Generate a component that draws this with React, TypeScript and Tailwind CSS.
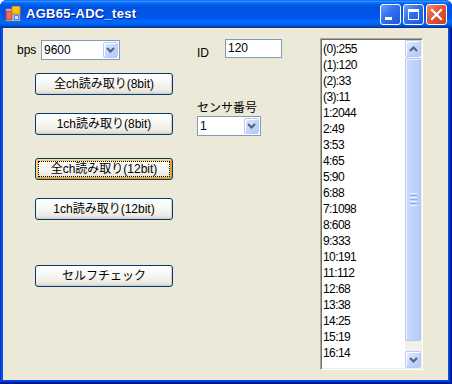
import React from 'react';

const readings = [
  '(0):255', '(1):120', '(2):33', '(3):11', '1:2044', '2:49', '3:53', '4:65', '5:90', '6:88',
  '7:1098', '8:608', '9:333', '10:191', '11:112', '12:68', '13:38', '14:25', '15:19', '16:14',
];

function Chevron({ up }: { up?: boolean }) {
  return (
    <svg width="9" height="6" viewBox="0 0 9 6">
      <polyline
        points={up ? '1,5 4.5,1.5 8,5' : '1,1 4.5,4.5 8,1'}
        fill="none"
        stroke="#4d6185"
        strokeWidth="2"
      />
    </svg>
  );
}

function ArrowBox({ up, className }: { up?: boolean; className?: string }) {
  return (
    <div
      className={`flex items-center justify-center rounded-[2px] border border-[#b9cbf6] bg-[linear-gradient(135deg,#e4ecfe_0%,#c6d6fb_50%,#b4c9f6_100%)] shadow-[inset_1px_1px_0_#ffffff] ${className ?? ''}`}
    >
      <Chevron up={up} />
    </div>
  );
}

function Combo({ value, className }: { value: string; className: string }) {
  return (
    <div className={`flex h-[20px] border border-[#7f9db9] bg-white ${className}`}>
      <span className="flex-1 pl-[2px] text-[12px] leading-[18px] text-black">{value}</span>
      <ArrowBox className="m-[1px] w-[15px]" />
    </div>
  );
}

function XpButton({ label, focused, className }: { label: string; focused?: boolean; className: string }) {
  return (
    <button
      className={`flex h-[22px] w-[138px] rounded-[3px] border border-[#003c74] bg-[linear-gradient(to_bottom,#ffffff_0%,#f6f6f2_50%,#ebe9e1_85%,#d6d0c5_100%)] p-[2px] ${
        focused
          ? 'shadow-[inset_1px_1px_0_#ffd98a,inset_-1px_-1px_0_#e59b17,inset_2px_2px_0_#fbc45a,inset_-2px_-2px_0_#f3a928]'
          : 'shadow-[inset_-1px_-1px_0_#d6d0c5]'
      } ${className}`}
    >
      <span
        className={`flex flex-1 items-center justify-center border text-[12px] leading-none text-black ${
          focused ? 'border-dotted border-black' : 'border-transparent'
        }`}
      >
        {label}
      </span>
    </button>
  );
}

function TitleIcon() {
  return (
    <svg width="16" height="16" viewBox="0 0 16 16">
      <rect x="0.5" y="2.5" width="15" height="13" fill="#9bb3e6" stroke="#3f5f9f" />
      <rect x="1" y="5" width="6" height="9" fill="#d8403a" />
      <rect x="2" y="6" width="4" height="7" fill="#f07060" />
      <rect x="7" y="0" width="8" height="8" fill="#f4c419" stroke="#c08a00" />
      <rect x="9" y="9" width="5" height="5" fill="#5a86d8" />
      <rect x="10" y="10" width="3" height="3" fill="#cfe0ff" />
    </svg>
  );
}

function CaptionButton({ kind }: { kind: 'min' | 'max' | 'close' }) {
  const bg =
    kind === 'close'
      ? 'bg-[linear-gradient(135deg,#f08a6a_0%,#e2553a_45%,#c8401f_100%)]'
      : 'bg-[linear-gradient(135deg,#6f9ff8_0%,#2f6fee_45%,#1f56d8_100%)]';
  return (
    <div className={`flex h-[21px] w-[21px] items-center justify-center rounded-[3px] border border-white ${bg}`}>
      <svg width="19" height="19" viewBox="0 0 19 19">
        {kind === 'min' && <rect x="4" y="12" width="7" height="3" fill="#ffffff" />}
        {kind === 'max' && (
          <>
            <rect x="4.5" y="4.5" width="10" height="10" fill="none" stroke="#ffffff" />
            <rect x="4" y="4" width="11" height="3" fill="#ffffff" />
          </>
        )}
        {kind === 'close' && (
          <path d="M5 5 L14 14 M14 5 L5 14" stroke="#ffffff" strokeWidth="2.2" strokeLinecap="square" />
        )}
      </svg>
    </div>
  );
}

function ScrollBar() {
  return (
    <div className="flex w-[16px] flex-col bg-[#f3f1ec]">
      <ArrowBox up className="h-[17px]" />
      <div className="mt-[1px] flex h-[283px] items-center justify-center rounded-[2px] border border-[#b5c9f5] bg-[linear-gradient(to_right,#cbdafc_0%,#c1d3fb_50%,#b5cbf8_100%)] shadow-[inset_1px_1px_0_#eef3fe]">
        <div className="flex flex-col gap-[1px]">
          <div className="h-[1px] w-[7px] bg-[#eef4fe]" />
          <div className="h-[1px] w-[7px] bg-[#8cb0f8]" />
          <div className="h-[1px] w-[7px] bg-[#eef4fe]" />
          <div className="h-[1px] w-[7px] bg-[#8cb0f8]" />
          <div className="h-[1px] w-[7px] bg-[#eef4fe]" />
          <div className="h-[1px] w-[7px] bg-[#8cb0f8]" />
          <div className="h-[1px] w-[7px] bg-[#eef4fe]" />
        </div>
      </div>
      <div className="flex-1" />
      <ArrowBox className="h-[17px]" />
    </div>
  );
}

export default function App() {
  return (
    <div className="flex h-[384px] w-[452px] flex-col overflow-hidden rounded-t-[7px] bg-[#0054e3] font-['Liberation_Sans','Noto_Sans_CJK_JP',sans-serif] shadow-[inset_-1px_-1px_0_#00138c,inset_-2px_-2px_0_#001ea0,inset_-3px_-3px_0_#003bda,inset_1px_0_0_#0831d9]">
      {/* caption */}
      <div className="flex h-[28px] items-center bg-[linear-gradient(to_bottom,#0058ee_0%,#3593ff_4%,#288eff_6%,#127dff_8%,#036ffc_10%,#0262ee_14%,#0057e5_20%,#0054e3_24%,#0055eb_56%,#005bf5_66%,#026afe_76%,#0062ef_86%,#0052d6_92%,#0040ab_96%,#003092_100%)] pl-[5px] pr-[5px]">
        <TitleIcon />
        <span className="ml-[5px] text-[13px] font-bold tracking-[0.3px] text-white [text-shadow:1px_1px_0_#0a1a8a]">
          AGB65-ADC_test
        </span>
        <div className="ml-auto flex gap-[2px]">
          <CaptionButton kind="min" />
          <CaptionButton kind="max" />
          <CaptionButton kind="close" />
        </div>
      </div>

      {/* client area */}
      <div className="mb-[4px] ml-[3px] mr-[4px] flex flex-1 items-start bg-[#ece9d8] text-black">
        <div className="ml-[14px] flex w-[156px] flex-col">
          <div className="mt-[12px] flex h-[20px] items-center">
            <span className="w-[24px] text-[12px] leading-none">bps</span>
            <Combo value="9600" className="w-[79px]" />
          </div>
          <XpButton label="全ch読み取り(8bit)" className="ml-[18px] mt-[13px]" />
          <XpButton label="1ch読み取り(8bit)" className="ml-[18px] mt-[18px]" />
          <XpButton label="全ch読み取り(12bit)" focused className="ml-[18px] mt-[23px]" />
          <XpButton label="1ch読み取り(12bit)" className="ml-[18px] mt-[18px]" />
          <XpButton label="セルフチェック" className="ml-[18px] mt-[45px]" />
        </div>

        <div className="ml-[24px] flex w-[85px] flex-col">
          <div className="mt-[11px] flex">
            <span className="w-[28px] pt-[8px] text-[12px] leading-[12px]">ID</span>
            <div className="h-[19px] w-[57px] border border-[#7f9db9] bg-white pl-[2px] text-[12px] leading-[17px]">120</div>
          </div>
          <span className="mt-[41px] h-[16px] text-[12px] leading-[16px]">センサ番号</span>
          <Combo value="1" className="w-[64px]" />
        </div>

        <div className="ml-[38px] mt-[10px] flex h-[332px] w-[103px] border border-b-white border-l-[#aca899] border-r-white border-t-[#aca899] bg-white p-[1px] shadow-[inset_1px_1px_0_#716f64,inset_-1px_-1px_0_#f1efe2]">
          <ul className="flex-1 pl-[1px] pt-[1px]">
            {readings.map((r) => (
              <li key={r} className="h-[16px] text-[12px] leading-[16px] tracking-[-0.6px]">
                {r}
              </li>
            ))}
          </ul>
          <ScrollBar />
        </div>
      </div>
    </div>
  );
}
